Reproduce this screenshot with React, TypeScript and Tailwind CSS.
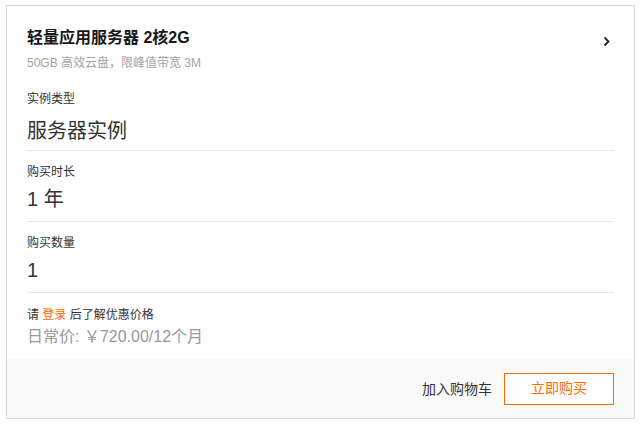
const FONT = {
  fontFamily: '"Liberation Sans", "Noto Sans CJK SC", sans-serif',
};

function Field({
  label,
  value,
  first,
}: {
  label: string;
  value: string;
  first?: boolean;
}) {
  return (
    <div
      className={`border-b border-[#e8e8e8] ${first ? "pt-[16px] pb-[5px]" : "pt-[11px] pb-[8px]"}`}
    >
      <div className="text-[12px] leading-[20px] text-[#333]">{label}</div>
      <div
        className={`${first ? "mt-[8px]" : "mt-[3px]"} text-[20px] leading-[28px] text-[#333]`}
      >
        {value}
      </div>
    </div>
  );
}

export default function App() {
  return (
    <div className="min-h-screen bg-white pt-[5px] pl-[6px]" style={FONT}>
      <div className="w-[629px] border border-[#d9d9d9] bg-white">
        <div className="px-[20px]">
          <header className="flex items-start justify-between pt-[20px]">
            <div>
              <h2 className="text-[16px] leading-[24px] font-bold text-[#181818]">
                轻量应用服务器 2核2G
              </h2>
              <div className="mt-[3px] text-[12px] leading-[20px] text-[#a3a3a3]">
                50GB 高效云盘，限峰值带宽 3M
              </div>
            </div>
            <svg
              width="8"
              height="11"
              viewBox="0 0 8 11"
              fill="none"
              stroke="#222"
              strokeWidth="1.8"
              className="mt-[10px] mr-[3px]"
            >
              <path d="M1.5 1.5l4 4-4 4" />
            </svg>
          </header>

          <Field label="实例类型" value="服务器实例" first />
          <Field label="购买时长" value="1 年" />
          <Field label="购买数量" value="1" />

          <div className="pt-[12px] pb-[10px]">
            <div className="text-[12px] leading-[20px] text-[#333]">
              请 <span className="text-[#ff6a00]">登录</span> 后了解优惠价格
            </div>
            <div className="text-[16px] leading-[24px] text-[#999]">
              日常价: ￥720.00/12个月
            </div>
          </div>
        </div>

        <footer className="flex h-[59px] items-center justify-end gap-[12px] bg-[#f9f9f9] px-[20px]">
          <button
            type="button"
            className="text-[14px] leading-[20px] text-[#333]"
          >
            加入购物车
          </button>
          <button
            type="button"
            className="h-[32px] w-[110px] border border-[#ff6a00] bg-white text-[14px] text-[#ff6a00]"
          >
            立即购买
          </button>
        </footer>
      </div>
    </div>
  );
}
